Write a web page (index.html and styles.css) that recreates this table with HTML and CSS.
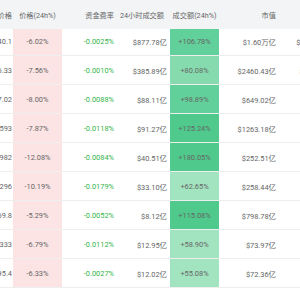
FILE: index.html
```html
<!DOCTYPE html>
<html>
<head>
<meta charset="utf-8">
<link rel="stylesheet" href="styles.css">
</head>
<body>
<div class="viewport">
  <div class="table">
    <div class="row head">
      <div class="c c1">价格</div>
      <div class="c c2">价格(24h%)</div>
      <div class="c c3">资金费率</div>
      <div class="c c4">24小时成交额</div>
      <div class="c c5">成交额(24h%)</div>
      <div class="c c6">市值</div>
      <div class="c c7">流通量</div>
    </div>
    <div class="body">
      <div class="row"><div class="c c1">$62840.1</div><div class="c c2 neg">-6.02%</div><div class="c c3 fr">-0.0025%</div><div class="c c4">$877.78亿</div><div class="c c5 g3">+106.78%</div><div class="c c6">$1.60万亿</div><div class="c c7">$1.60482万亿</div></div>
      <div class="row"><div class="c c1">$2046.33</div><div class="c c2 neg">-7.56%</div><div class="c c3 fr">-0.0010%</div><div class="c c4">$385.89亿</div><div class="c c5 g2">+80.08%</div><div class="c c6">$2460.43亿</div><div class="c c7">$246043.3亿</div></div>
      <div class="row"><div class="c c1">$147.02</div><div class="c c2 neg">-8.00%</div><div class="c c3 fr">-0.0088%</div><div class="c c4">$88.11亿</div><div class="c c5 g3">+98.89%</div><div class="c c6">$649.02亿</div><div class="c c7">$649.02亿</div></div>
      <div class="row"><div class="c c1">$0.5593</div><div class="c c2 neg">-7.87%</div><div class="c c3 fr">-0.0118%</div><div class="c c4">$91.27亿</div><div class="c c5 g4">+125.24%</div><div class="c c6">$1263.18亿</div><div class="c c7">$1263.18亿</div></div>
      <div class="row"><div class="c c1">$0.0982</div><div class="c c2 neg">-12.08%</div><div class="c c3 fr">-0.0084%</div><div class="c c4">$40.51亿</div><div class="c c5 g4">+180.05%</div><div class="c c6">$252.51亿</div><div class="c c7">$252.51亿</div></div>
      <div class="row"><div class="c c1">$0.4296</div><div class="c c2 neg">-10.19%</div><div class="c c3 fr">-0.0179%</div><div class="c c4">$33.10亿</div><div class="c c5 g1">+62.65%</div><div class="c c6">$258.44亿</div><div class="c c7">$258.44亿</div></div>
      <div class="row"><div class="c c1">$569.8</div><div class="c c2 neg">-5.29%</div><div class="c c3 fr">-0.0052%</div><div class="c c4">$8.12亿</div><div class="c c5 g4">+115.08%</div><div class="c c6">$798.78亿</div><div class="c c7">$798.78亿</div></div>
      <div class="row"><div class="c c1">$0.1333</div><div class="c c2 neg">-6.79%</div><div class="c c3 fr">-0.0112%</div><div class="c c4">$12.95亿</div><div class="c c5 g1">+58.90%</div><div class="c c6">$73.97亿</div><div class="c c7">$73.97亿</div></div>
      <div class="row"><div class="c c1">$1295.4</div><div class="c c2 neg">-6.33%</div><div class="c c3 fr">-0.0027%</div><div class="c c4">$12.02亿</div><div class="c c5 g1">+55.08%</div><div class="c c6">$72.36亿</div><div class="c c7">$72.36亿</div></div>
    </div>
  </div>
</div>
</body>
</html>
```
FILE: styles.css
```css
html, body {
  margin: 0;
  padding: 0;
  background: #ffffff;
}
.viewport {
  width: 300px;
  height: 300px;
  overflow: hidden;
}
.table {
  margin-left: -40px;
  display: flex;
  flex-direction: column;
  font-family: Roboto, "Noto Sans CJK SC", sans-serif;
  font-size: 7.4px;
  color: #666666;
}
.row {
  display: grid;
  grid-template-columns: 53px 49px 56px 52px 49px 61px 64px;
  height: 28px;
  border-bottom: 1px solid #eeeeee;
}
.row.head {
  height: 29px;
  border-bottom: none;
  background: #f2f4f6;
  position: relative;
  z-index: 1;
  font-size: 7.2px;
}
.body {
  margin-top: -2px;
}
.c {
  display: flex;
  align-items: center;
  justify-content: flex-end;
  white-space: nowrap;
  padding-right: 4px;
}
.c1 { padding-right: 1px; }
.c2, .c5 {
  justify-content: center;
  padding-right: 0;
}
.c4 { padding-right: 3px; }
.head .c4 { padding-right: 6px; }
.c6 { padding-right: 4px; }
.c7 { padding-right: 2px; }
.neg { background: #fce4e4; }
.fr { color: #32b548; }
.g1 { background: #a2e3c0; }
.g2 { background: #86dbae; }
.g3 { background: #62d09a; }
.g4 { background: #4fca8c; }
```
